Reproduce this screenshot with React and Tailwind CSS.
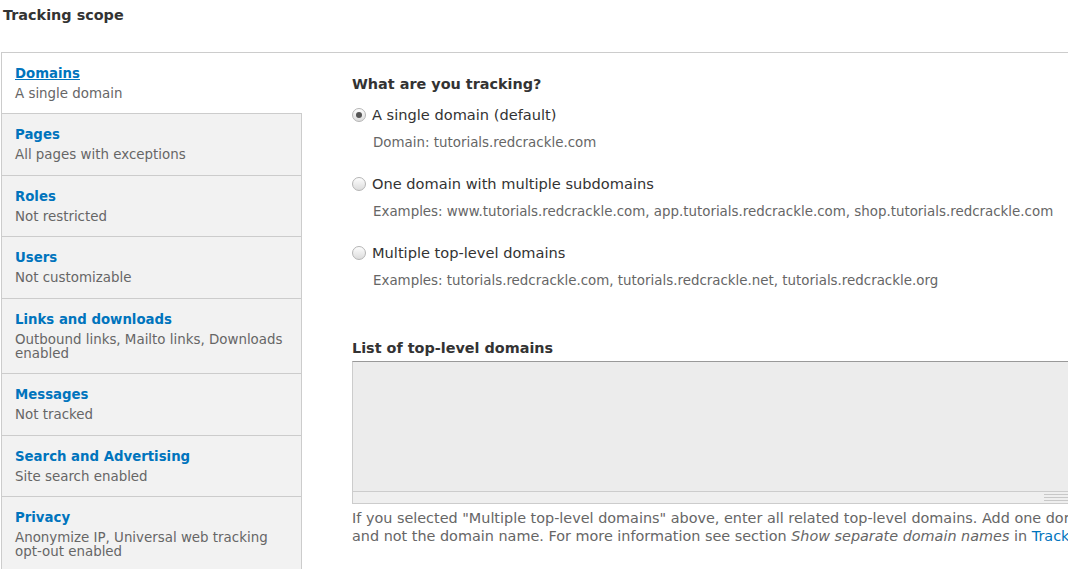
import React from "react";

const tabs = [
  { title: "Domains", summary: ["A single domain"], active: true, h: "h-[61px]" },
  { title: "Pages", summary: ["All pages with exceptions"], h: "h-[62px]" },
  { title: "Roles", summary: ["Not restricted"], h: "h-[61px]" },
  { title: "Users", summary: ["Not customizable"], h: "h-[62px]" },
  { title: "Links and downloads", summary: ["Outbound links, Mailto links, Downloads", "enabled"], h: "h-[75px]" },
  { title: "Messages", summary: ["Not tracked"], h: "h-[62px]" },
  { title: "Search and Advertising", summary: ["Site search enabled"], h: "h-[61px]" },
  { title: "Privacy", summary: ["Anonymize IP, Universal web tracking", "opt-out enabled"], h: "h-[76px]" },
];

function Radio({ checked }) {
  return (
    <span className="relative flex h-[14px] w-[14px] shrink-0 items-center justify-center rounded-full border border-[#b5b5b5] bg-gradient-to-b from-[#fdfdfd] to-[#dcdcdc]">
      {checked && <span className="h-[6px] w-[6px] rounded-full bg-[#555]" />}
    </span>
  );
}

function Option({ checked, label, desc, first }) {
  return (
    <div className={first ? "mt-[11px]" : "mt-[22px]"}>
      <div className="flex items-center gap-[6px] text-[14.6px] leading-[20px] text-[#333]">
        <Radio checked={checked} />
        <span>{label}</span>
      </div>
      <div className="mt-[9px] pl-[21px] text-[13.4px] leading-[18px] text-[#666] whitespace-nowrap">{desc}</div>
    </div>
  );
}

export default function App() {
  return (
    <div className="h-[569px] w-[1068px] overflow-hidden bg-white font-['DejaVu_Sans',sans-serif]">
      <h2 className="pl-[3px] pt-[5px] text-[14.4px] font-bold leading-[20px] text-[#333]">Tracking scope</h2>
      <div className="ml-px mt-[27px] flex w-[1400px] border-l border-t border-[#ccc]">
        <ul className="w-[300px] shrink-0">
          {tabs.map((t) => (
            <li
              key={t.title}
              className={
                t.h +
                " border-b border-[#ccc] pl-[13px] pt-[11px] " +
                (t.active ? "bg-white" : "border-r bg-[#f2f2f2]")
              }
            >
              <div
                className={
                  "text-[13.3px] font-bold leading-[20px] text-[#0074bd] " + (t.active ? "underline" : "")
                }
              >
                {t.title}
              </div>
              <div className="mt-[3px] text-[13.4px] leading-[14px] text-[#666]">
                {t.summary.map((s) => (
                  <div key={s}>{s}</div>
                ))}
              </div>
            </li>
          ))}
        </ul>
        <div className="flex-1 pl-[50px] pt-[21px]">
          <h3 className="text-[14.4px] font-bold leading-[20px] text-[#333]">What are you tracking?</h3>
          <Option first checked label="A single domain (default)" desc="Domain: tutorials.redcrackle.com" />
          <Option
            label="One domain with multiple subdomains"
            desc="Examples: www.tutorials.redcrackle.com, app.tutorials.redcrackle.com, shop.tutorials.redcrackle.com"
          />
          <Option
            label="Multiple top-level domains"
            desc="Examples: tutorials.redcrackle.com, tutorials.redcrackle.net, tutorials.redcrackle.org"
          />
          <h3 className="mt-[48px] text-[14.4px] font-bold leading-[20px] text-[#333]">List of top-level domains</h3>
          <div className="mt-[3px] w-[1000px] border-x border-b border-t border-x-[#ccc] border-b-[#ccc] border-t-[#999] bg-[#ececec]">
            <div className="h-[129px]" />
            <div className="relative h-[12px] border-t border-[#ccc] bg-[#efefef]">
              <div className="absolute left-[691px] top-[2px] flex w-[40px] flex-col gap-[2px]">
                <div className="h-px bg-[#c8c8c8]" />
                <div className="h-px bg-[#c8c8c8]" />
                <div className="h-px bg-[#c8c8c8]" />
              </div>
            </div>
          </div>
          <div className="mt-[5px] whitespace-nowrap text-[14.4px] leading-[18px] text-[#666]">
            <div>
              If you selected "Multiple top-level domains" above, enter all related top-level domains. Add one domain per
              line. By default, the data in your reports only includes the path and name of the page,
            </div>
            <div>
              and not the domain name. For more information see section <em>Show separate domain names</em> in{" "}
              <span className="text-[#0074bd]">Tracking Multiple Domains</span>.
            </div>
          </div>
        </div>
      </div>
    </div>
  );
}
